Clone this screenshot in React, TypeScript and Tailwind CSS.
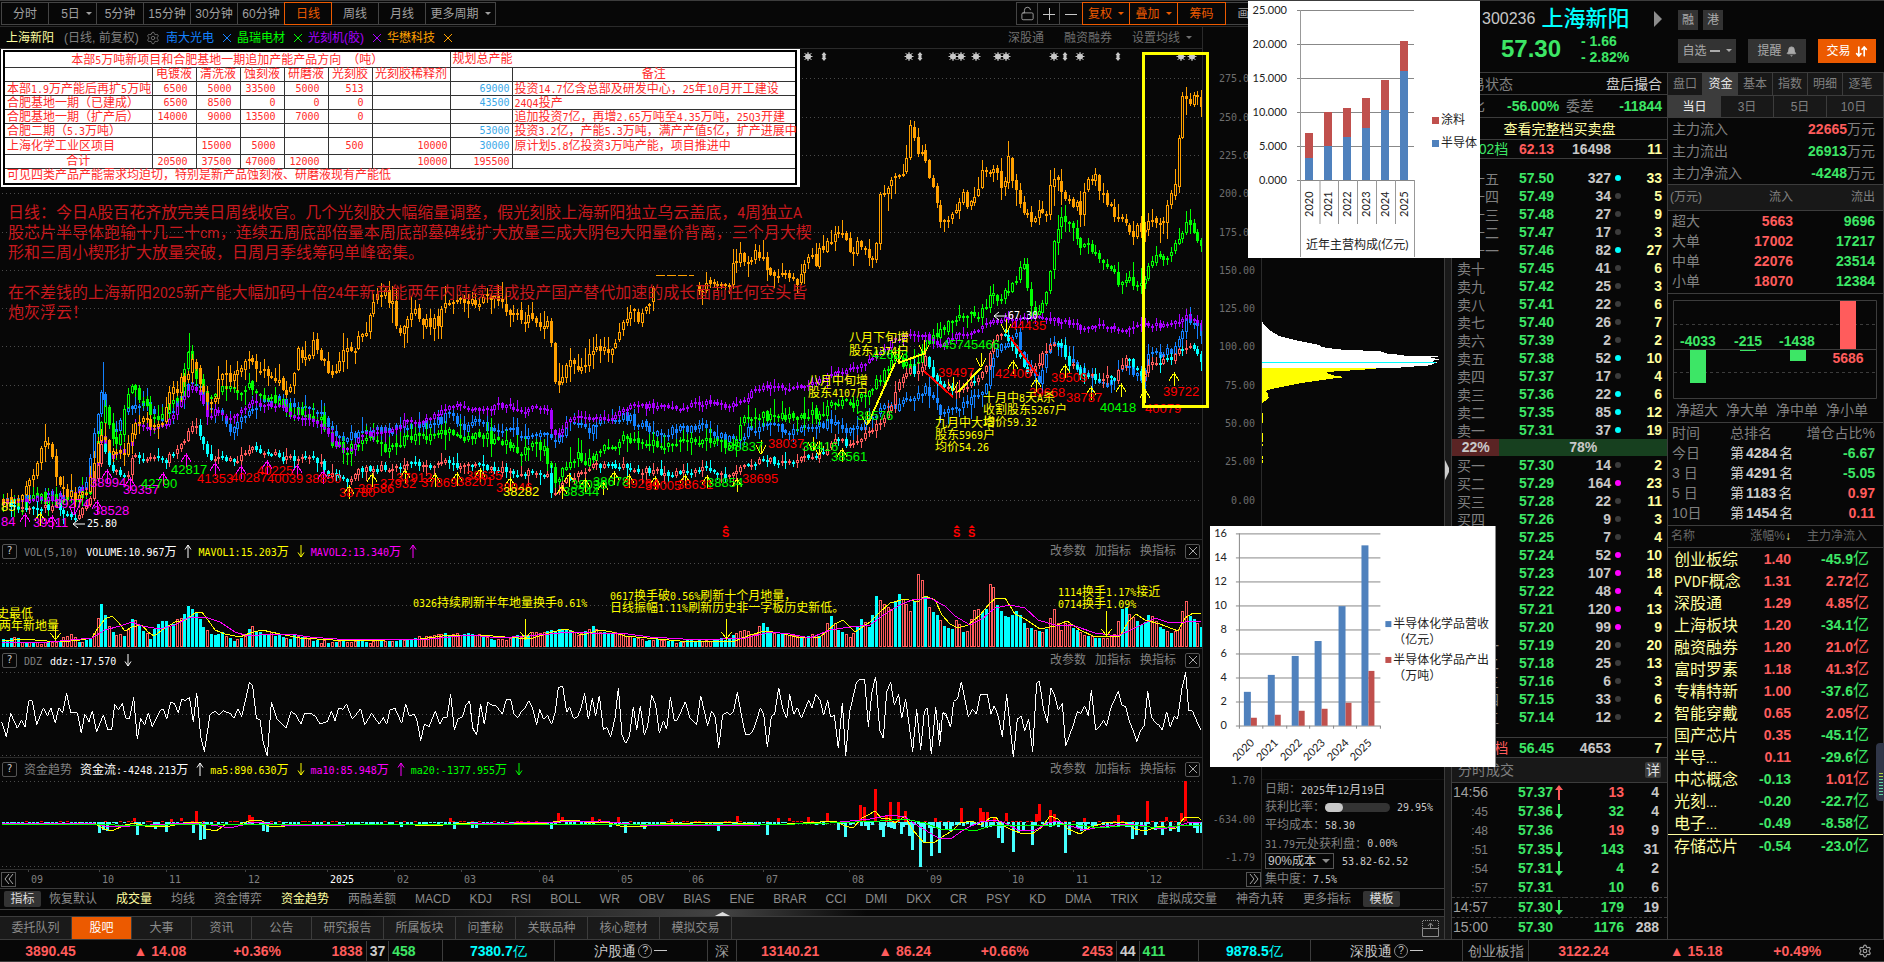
import React from 'react';
import { Bell, ArrowDownUp, Settings, LockOpen } from 'lucide-react';

type Point = [number, number];

const CJK = /([\u2e80-\uffef]+)/;

// latin runs are set in a half-width mono, CJK runs in the full-width face
const Mixed: React.FC<{ text: string; big?: boolean }> = ({ text, big }) => (
  <>
    {text.split(CJK).filter(Boolean).map((run, i) => (
      <span
        key={i}
        className={
          CJK.test(run)
            ? big ? "font-['Noto_Sans_CJK_SC',sans-serif] text-base leading-5" : "font-['Noto_Sans_CJK_SC',sans-serif] text-xs leading-[11px]"
            : big ? "font-['Roboto',sans-serif] text-sm leading-5" : "font-['DejaVu_Sans_Mono',monospace] text-[10px] leading-[11px]"
        }
      >
        {run}
      </span>
    ))}
  </>
);

const SvgMixed: React.FC<{ x: number; y: number; text: string; fill: string }> = ({ x, y, text, fill }) => (
  <text x={x} y={y} fill={fill}>
    {text.split(CJK).filter(Boolean).map((run, i) => (
      <tspan
        key={i}
        className={
          CJK.test(run)
            ? "font-['Noto_Sans_CJK_SC',sans-serif] text-xs"
            : "font-['DejaVu_Sans_Mono',monospace] text-[10px]"
        }
      >
        {run}
      </tspan>
    ))}
  </text>
);

/* ---------- data ---------- */

const parse = (s: string): Point[] => s.trim().split(/\s+/).map((p) => p.split(',').map(Number) as Point);

const ORANGE = parse(`2,502 22,500 27,485 33,478 40,455 47,440 52,460 56,478 60,485 66,493 74,494 84,492 92,480 97,440 101,430 105,440
 110,455 118,455 126,455 131,430 136,415 145,420 160,427 164,408 168,395 178,388 188,370 192,355 196,368 204,390 208,412 213,400 218,385
 224,375 230,383 236,367 244,362 252,360 258,375 268,370 276,378 280,378 284,390 292,390 296,345 304,360 312,345 318,350 326,365 332,380
 338,370 343,350 352,355 358,342 365,335 368,315 370,308 376,300 382,293 388,298 393,305 397,330 400,335 404,320 412,310 420,322 430,325
 440,318 443,303 448,298 456,300 466,308 470,303 480,305 486,295 490,300 500,305 508,308 515,315 525,318 535,325 547,322 552,350 554,382
 558,390 563,376 570,365 580,365 585,373 590,355 595,345 605,348 615,345 619,330 622,316 632,315 640,316 648,305 654,280 656,275 697,290
 702,285 706,282 720,288 729,286 733,265 738,250 745,262 752,254 760,258 768,265 775,275 783,268 790,282 798,283 803,270 808,255 815,262
 820,250 825,246 832,240 838,228 843,232 850,250 860,245 868,258 875,255 880,200 885,198 890,175 898,172 904,178 907,155 909,130 913,135
 918,155 924,158 930,180 936,195 940,220 945,213 948,225 955,215 960,195 970,205 976,190 982,172 990,170 996,175 1002,195 1008,155
 1012,180 1018,200 1025,210 1032,218 1038,212 1045,215 1050,190 1055,178 1062,192 1070,200 1080,210 1086,180 1092,175 1098,182 1105,195
 1112,212 1120,210 1125,225 1130,237 1136,232 1142,228 1150,225 1162,228 1168,200 1175,180 1178,150 1181,105 1186,95 1190,100 1194,90
 1198,100 1201,105`);

const GREEN = parse(`2,502 20,508 30,498 60,500 80,497 92,485 97,450 101,420 103,405 107,410 112,440 118,450 122,415 130,390 134,390 138,400
 150,410 160,418 165,410 172,395 180,400 188,350 193,370 200,385 207,400 214,395 222,390 230,385 236,390 243,398 250,385 258,395 268,398
 276,400 284,410 292,415 298,405 306,415 312,418 320,420 326,435 335,445 345,450 355,445 362,438 375,435 385,450 395,450 402,438 415,435
 430,435 445,430 455,435 465,438 475,433 490,440 505,440 520,458 530,440 545,450 550,470 556,480 562,467 575,455 588,462 600,450 615,445
 622,435 635,440 650,445 670,445 690,440 710,440 730,445 737,440 738,422 750,420 762,415 775,418 790,418 805,415 820,415 830,402 845,400
 855,405 865,395 875,385 882,375 888,370 895,355 903,365 912,370 925,345 935,335 945,330 951,318 960,320 985,310 992,285 998,300 1005,290
 1012,285 1018,275 1024,265 1030,300 1035,320 1049,285 1054,240 1058,225 1063,215 1070,225 1080,250 1090,245 1100,265 1110,270 1118,280
 1130,280 1140,285 1145,275 1150,260 1155,255 1162,260 1170,250 1178,240 1185,225 1192,230 1197,240 1201,247`);

const PURPLE = parse(`2,502 30,500 60,498 85,490 95,460 100,430 108,460 125,450 135,425 150,428 165,425 175,410 185,395 192,388 200,395
 207,415 218,410 230,420 240,412 250,402 265,405 280,405 290,415 305,418 318,425 325,430 335,445 350,450 360,435 380,432 395,430 405,420
 420,422 435,415 450,406 470,408 485,410 500,405 520,412 532,405 547,408 551,430 557,440 563,425 570,418 590,418 610,418 622,408 650,406
 670,408 690,405 710,402 730,407 742,400 752,393 762,385 775,387 800,387 815,380 830,375 845,372 860,365 870,358 880,352 895,340 910,335
 925,335 940,345 955,335 975,330 990,322 1010,318 1030,315 1045,320 1065,322 1080,328 1100,325 1125,332 1140,325 1160,325 1175,322
 1185,315 1195,320 1201,325`);

const BLUE = parse(`2,503 30,497 60,495 85,490 97,415 101,390 107,420 115,440 125,410 133,405 145,405 160,420 175,405 188,380 200,385
 207,410 218,410 230,428 245,415 255,405 275,402 290,405 305,405 320,415 330,432 345,440 360,430 375,430 395,430 410,425 430,425 440,420
 452,415 462,428 475,420 490,430 510,430 525,440 545,430 551,440 558,440 566,425 580,423 590,430 600,420 615,423 622,412 635,423 660,433
 680,430 700,428 715,435 735,438 750,430 765,425 785,430 810,428 830,422 850,430 865,425 880,410 895,405 910,400 925,390 940,410 955,412
 970,400 985,385 995,350 1003,345 1015,335 1030,370 1040,380 1050,345 1060,345 1070,362 1090,375 1105,388 1115,378 1125,360 1140,382
 1150,350 1160,355 1175,350 1185,320 1192,318 1201,335`);

const STOCK = parse(`2,504 25,508 60,508 72,520 82,512 90,500 97,465 101,440 104,450 110,470 120,472 128,475 132,455 138,458 150,460
 165,460 180,448 190,430 195,425 202,440 208,458 218,455 228,462 240,458 250,448 258,450 270,452 285,460 298,457 320,460 328,475 345,480
 360,470 380,468 405,465 430,465 450,460 460,468 475,463 490,470 505,470 520,477 535,470 548,475 551,490 556,492 565,480 580,475 595,465
 620,465 640,470 665,473 690,473 705,468 725,475 737,472 745,465 765,458 778,462 800,460 820,455 835,440 850,445 865,435 880,420 890,410
 900,380 910,370 920,375 925,355 935,380 945,390 960,388 975,380 985,365 995,335 1003,330 1015,350 1028,372 1040,360 1052,340 1060,345
 1070,365 1085,375 1100,378 1115,378 1125,355 1135,370 1143,378 1150,360 1165,362 1180,350 1188,345 1195,350 1201,362`);

const VOLUME = parse(`2,638 14,636 30,642 60,640 70,632 80,641 92,636 97,620 99,600 103,605 107,624 115,632 125,635 130,620 134,615 140,625
 150,637 155,625 163,618 170,625 178,618 186,610 190,602 194,610 200,618 206,630 215,633 222,630 232,640 245,635 251,623 258,632 270,631
 285,638 298,633 310,639 340,641 400,639 440,633 470,632 500,639 530,632 550,630 565,626 580,634 592,625 605,632 620,632 640,638 680,640
 730,637 740,629 755,632 762,620 770,631 800,636 812,632 822,634 830,613 838,628 850,636 862,617 870,628 876,594 882,600 890,610 898,592
 905,600 912,612 919,563 924,593 930,608 940,618 950,630 957,617 965,635 975,606 985,612 991,572 996,600 1003,613 1010,615 1018,608
 1025,625 1035,628 1045,632 1054,607 1060,630 1066,620 1075,628 1085,634 1105,636 1115,632 1123,603 1130,612 1140,625 1150,612 1160,625
 1170,632 1180,625 1185,595 1190,615 1201,624`);

const MAVOL1 = '2,640 14,640 22,639 60,642 80,640 92,638 98,628 105,619 112,616 119,623 125,631 132,627 142,625 148,632 154,636 165,628 175,622 185,620 195,613 202,612 208,620 215,630 225,634 240,637 250,633 262,630 280,634 300,638 350,641 420,639 450,635 480,635 530,639 552,632 566,629 582,635 600,630 612,632 625,636 680,641 735,641 750,635 765,631 780,633 800,638 820,637 835,624 843,620 855,632 870,622 880,612 890,603 905,599 918,602 925,596 935,600 942,615 950,624 958,628 968,625 980,615 990,603 996,598 1005,598 1015,614 1025,619 1040,629 1055,626 1067,621 1080,630 1095,637 1120,636 1128,622 1136,614 1145,620 1160,624 1178,631 1185,618 1193,613 1201,614';
const MAVOL2 = '2,643 50,642 92,638 105,630 120,626 132,622 142,626 160,629 175,625 190,617 205,617 220,622 235,632 248,636 270,634 290,634 310,637 350,640 430,639 470,635 500,638 550,634 570,632 590,633 620,633 650,637 700,640 745,638 770,632 790,634 810,638 830,630 850,627 870,625 885,614 900,605 912,600 930,598 945,606 955,616 970,625 982,619 995,608 1010,605 1025,608 1038,620 1055,625 1075,626 1095,633 1118,636 1135,628 1155,618 1170,623 1185,622 1201,621';

// three chunks of the ddz curve, three units to the pixel
const DDZ = [
  '5,245 19,290 32,220 52,265 64,240 75,262 86,183 97,183 110,255 130,203 142,228 153,205 166,250 176,203 188,218 200,160 212,218 232,218 244,280 254,222 267,245 277,213 290,275 310,225 324,270 335,270 344,193 355,210 367,190 377,235 388,237 401,172 412,298 422,235 434,255 445,218 457,260 480,212 490,206 500,238 512,187 523,190 535,218 545,177 557,182 568,172 580,245 590,158 602,290 613,335 630,225 645,213 658,225 668,212 690,220 703,235 713,206 725,230 740,165 748,128 758,137 769,235 780,240 790,310 802,347 814,187 830,235 858,265 873,215 888,225 903,253 914,220 935,220 948,232 960,252 982,245 994,213 1005,242 1016,203 1028,208 1040,193 1057,238 1082,206 1094,255 1115,220 1138,253 1150,232 1160,253 1170,210 1185,205 1205,250 1217,192 1228,228 1243,222 1252,245 1262,303 1273,253 1287,260 1306,213 1320,253 1330,233 1341,232 1352,163 1363,270 1375,235 1387,232 1398,195 1409,182 1418,265 1430,285 1440,205',
  '0,197 8,262 20,285 32,193 43,253 53,185 65,195 77,196 97,222 109,178 122,178 132,222 143,233 153,217 165,205 176,182 188,205 200,255 209,208 221,238 233,227 245,253 256,215 265,143 278,138 290,217 299,202 311,235 322,232 333,205 344,160 355,238 367,175 377,228 388,167 400,268 411,263 422,290 435,235 445,143 456,285 467,310 478,290 490,200 500,270 511,197 523,285 533,258 545,165 557,195 568,280 580,242 590,268 601,172 613,243 622,240 646,185 660,235 680,253 692,167 713,257 725,213 736,232 746,325 758,225 770,217 780,223 790,217 802,157 814,225 826,282 838,284 850,270 871,205 881,222 892,322 904,230 914,222 926,143 938,205 950,235 959,163 971,223 982,203 994,235 1016,180 1026,205 1037,163 1050,180 1061,226 1073,180 1082,232 1093,225 1105,325 1117,188 1127,347 1139,215 1160,125 1172,117 1184,120 1195,260 1206,155 1217,110 1229,270 1240,295 1250,155 1262,127 1273,195 1286,163 1295,235 1307,178 1318,260 1328,335 1340,208 1352,330 1363,215 1372,203 1384,343 1397,200 1409,318 1418,218 1428,222 1440,255',
  '-2,250 1,300 8,218 20,230 32,262 41,185 53,175 64,125 85,230 97,208 109,222 121,163 142,163 153,222 163,197 175,230 187,290 200,163 220,350 232,237 244,228 254,273 266,238 278,335 290,128 298,123 310,205 322,248 332,143 344,167 355,210 367,190 377,318 400,255 412,215 422,220 434,197 445,228 454,150 467,270 478,260 491,240 500,258 512,205 535,153 545,195 557,200 568,245 580,272 590,305 602,270 613,258 623,153 634,230 645,247 656,255 667,270 680,215 691,262 702,230 713,237 725,150 737,97 746,212 757,212 769,240 782,270',
];

const FLOW_DOWN = parse(`99,833 103,830 107,831 137,835 155,829 166,832 193,833 200,840 204,839 263,831 267,832 401,827 454,829 472,828 476,828 551,829
 610,827 625,833 644,829 718,831 767,835 838,830 845,837 868,830 880,830 883,837 894,829 901,834 909,836 912,850 920,867 924,842 931,856
 939,853 946,829 950,831 998,838 1002,843 1013,852 1018,833 1023,830 1032,845 1065,853 1069,835 1081,831 1085,829 1132,839 1136,835
 1145,835 1155,830 1162,835 1170,831 1178,832 1197,833 1201,833`);
const FLOW_UP = parse(`134,818 171,819 181,818 196,811 249,815 252,817 450,818 558,813 562,817 592,817 599,819 618,817 671,819 737,816 778,818
 789,818 808,817 827,813 860,805 864,807 875,789 886,815 890,802 898,802 905,811 935,818 961,808 980,808 983,812 987,812 994,818 1006,813
 1036,814 1039,804 1050,810 1054,814 1084,818 1118,815 1147,801 1166,817 1181,813 1185,781`);

const HOLDERS: [number, number, string, string][] = [
  [1, 521, '84', '#f0f'], [1, 506, '85', '#ff0'], [33, 522, '39511', '#f0f'], [54, 503, '39274', '#f0f'], [90, 482, '38994', '#f0f'],
  [93, 510, '38528', '#f0f'], [123, 489, '39357', '#f0f'], [141, 483, '42790', '#0f0'], [171, 469, '42817', '#0f0'],
  [197, 478, '41353', '#f00'], [231, 477, '40287', '#f00'], [257, 470, '40225', '#f00'], [267, 478, '40039', '#f00'],
  [305, 478, '38850', '#f00'], [339, 492, '38780', '#f00'], [358, 488, '38586', '#f00'], [380, 483, '37932', '#f00'],
  [396, 477, '37912', '#f00'], [421, 482, '37869', '#f00'], [457, 481, '38201', '#f00'], [466, 475, '38635', '#f00'],
  [496, 487, '38946', '#f00'], [503, 491, '38282', '#ff0'], [563, 491, '38344', '#0f0'], [571, 484, '38030', '#0f0'],
  [593, 481, '38678', '#0f0'], [623, 483, '39264', '#f00'], [645, 485, '39005', '#f00'], [677, 484, '38631', '#f00'],
  [707, 482, '38854', '#0f0'], [742, 478, '38695', '#f00'], [727, 446, '38837', '#0f0'], [768, 443, '38037', '#f00'],
  [802, 446, '38416', '#0f0'], [831, 456, '38561', '#0f0'], [857, 415, '38576', '#0f0'], [872, 354, '42683', '#0f0'],
  [938, 372, '39497', '#f00'], [942, 344, '45745466', '#0f0'], [1010, 325, '44435', '#f00'], [995, 373, '42406', '#f00'],
  [1051, 377, '39509', '#f00'], [1029, 392, '39668', '#f00'], [1066, 397, '38787', '#f00'], [1100, 407, '40418', '#0f0'],
  [1145, 408, '40079', '#f00'], [1163, 391, '39722', '#f00'],
];

const NOTES: [number, number, string][] = [
  [849, 338, '八月下旬增'], [849, 351, '股东1374户'], [808, 381, '八月中旬增'], [808, 393, '股东4107户'],
  [935, 423, '九月中大增'], [935, 435, '股东5969户'], [935, 447, '均价54.26'],
  [983, 398, '十月中8天A杀'], [983, 410, '收割股东5267户'], [983, 422, '均价59.32'],
];

const UP_MAGENTA = parse('25,513 52,515 107,469 130,477 97,500 163,472 186,453 215,462 241,465 267,460 297,464 323,470');
const UP_YELLOW = parse('40,512 349,485 372,473 405,469 435,473 457,472 480,468 510,477 562,485 569,473 585,478 603,481 614,471 629,474 655,476 685,474 707,475 737,478 842,448 1013,360 1036,378 1065,364 1091,386 1121,383 1145,389 1174,372');
const DOWN_YELLOW = parse('761,454 813,451 819,455 867,425 898,362 924,354 953,391 981,367 1006,333');

const SUNS = [808, 909, 953, 961, 976, 998, 1006, 1054, 1080, 1181, 1192];
const DIAMONDS = [824, 920, 1065, 1118];
const PRICE_GRID = [78, 117, 155, 193, 232, 270, 308, 346, 385, 423, 461, 500];
const MONTHS: [number, string][] = [
  [28, '09'], [99, '10'], [166, '11'], [245, '12'], [327, '2025'], [394, '02'], [461, '03'], [539, '04'],
  [618, '05'], [689, '06'], [763, '07'], [849, '08'], [927, '09'], [1009, '10'], [1073, '11'], [1147, '12'],
];

const CAPACITY: { name: string; cells: string[]; total: string; note: string; tall?: boolean }[] = [
  { name: '本部1.9万产能后再扩5万吨', cells: ['6500', '5000', '33500', '5000', '513', ''], total: '69000', note: '投资14.7亿含总部及研发中心，25年10月开工建设' },
  { name: '合肥基地一期（已建成）', cells: ['6500', '8500', '0', '0', '0', ''], total: '43500', note: '24Q4投产' },
  { name: '合肥基地一期（扩产后）', cells: ['14000', '9000', '13500', '7000', '0', ''], total: '', note: '追加投资7亿，再增2.65万吨至4.35万吨，25Q3开建' },
  { name: '合肥二期（5.3万吨）', cells: ['', '', '', '', '', ''], total: '53000', note: '投资3.2亿，产能5.3万吨，满产产值5亿，扩产进展中' },
  { name: '上海化学工业区项目', cells: ['', '15000', '5000', '', '500', '10000'], total: '30000', note: '原计划5.8亿投资3万吨产能，项目推进中', tall: true },
];

type Level = [string, string, string, string, string];
const SELLS: Level[] = [
  ['卖十五', '57.50', '327', 'c', '33'], ['卖十四', '57.49', '34', '', '5'], ['卖十三', '57.48', '27', '', '9'],
  ['卖十二', '57.47', '17', '', '3'], ['卖十一', '57.46', '82', 'c', '27'], ['卖十', '57.45', '41', '', '6'],
  ['卖九', '57.42', '25', '', '3'], ['卖八', '57.41', '22', '', '6'], ['卖七', '57.40', '26', '', '7'],
  ['卖六', '57.39', '2', '', '2'], ['卖五', '57.38', '52', 'c', '10'], ['卖四', '57.37', '17', '', '4'],
  ['卖三', '57.36', '22', 'c', '6'], ['卖二', '57.35', '85', 'c', '12'], ['卖一', '57.31', '37', 'c', '19'],
];
const BUYS: Level[] = [
  ['买一', '57.30', '14', '', '2'], ['买二', '57.29', '164', 'm', '23'], ['买三', '57.28', '22', '', '11'],
  ['买四', '57.26', '9', '', '3'], ['买五', '57.25', '7', '', '4'], ['买六', '57.24', '52', 'm', '10'],
  ['买七', '57.23', '107', 'm', '18'], ['买八', '57.22', '48', 'm', '4'], ['买九', '57.21', '120', 'm', '13'],
  ['买十', '57.20', '99', 'm', '9'], ['买十一', '57.19', '20', '', '20'], ['买十二', '57.18', '25', '', '13'],
  ['买十三', '57.16', '6', '', '3'], ['买十四', '57.15', '33', '', '6'], ['买十五', '57.14', '12', '', '2'],
];
const TRADES: [string, string, string, string, string, boolean][] = [
  ['14:56', '57.37', 'u', '13', '4', true], [':45', '57.36', 'd', '32', '4', false], [':48', '57.36', '', '19', '9', true],
  [':51', '57.35', 'd', '143', '31', false], [':54', '57.31', 'd', '4', '2', false], [':57', '57.31', '', '10', '6', false],
  ['14:57', '57.30', 'd', '179', '19', false], ['15:00', '57.30', '', '1176', '288', false],
];
const SECTORS: [string, string, string][] = [
  ['创业板综', '1.40', '-45.9'], ['PVDF概念', '1.31', '2.72'], ['深股通', '1.29', '4.85'], ['上海板块', '1.20', '-34.1'],
  ['融资融券', '1.20', '21.0'], ['富时罗素', '1.18', '41.3'], ['专精特新', '1.00', '-37.6'], ['智能穿戴', '0.65', '2.05'],
  ['国产芯片', '0.35', '-45.1'], ['半导...', '0.11', '-29.6'], ['中芯概念', '-0.13', '1.01'], ['光刻...', '-0.20', '-22.7'],
  ['电子...', '-0.49', '-8.58'], ['存储芯片', '-0.54', '-23.0'],
];

/* ---------- drawing helpers ---------- */

const rng = (seed: number) => () => {
  seed = (seed * 1664525 + 1013904223) % 4294967296;
  return seed / 4294967296;
};

const at = (pts: Point[], x: number) => {
  const i = pts.findIndex((p) => p[0] >= x);
  if (i <= 0) return pts[i === 0 ? 0 : pts.length - 1][1];
  const [x0, y0] = pts[i - 1];
  const [x1, y1] = pts[i];
  return y0 + ((y1 - y0) * (x - x0)) / (x1 - x0 || 1);
};

const STEP = 3.78;

const candles = (pts: Point[], vol: number, seed: number, gap?: Point) => {
  const r = rng(seed);
  let up = '';
  let down = '';
  let prev = pts[0][1];
  for (let x = 3; x < 1202; x += STEP) {
    if (gap && x > gap[0] && x < gap[1]) continue;
    const close = at(pts, x) + (r() - 0.5) * vol * 1.3;
    const open = prev + (r() - 0.5) * vol * 0.5;
    prev = close;
    const cx = Math.round(x);
    const top = Math.round(Math.min(open, close));
    const bot = Math.max(Math.round(Math.max(open, close)), top + 2);
    const hi = Math.round(top - r() * r() * vol * 2 - 1);
    const lo = Math.round(bot + r() * r() * vol * 2 + 1);
    const d = `M${cx + 0.5} ${hi}V${top}M${cx + 0.5} ${bot}V${lo}M${cx - 0.5} ${top + 0.5}h2V${bot - 0.5}h-2z`;
    if (close <= open) up += d;
    else down += d;
  }
  return { up, down };
};

const Candles: React.FC<{ pts: Point[]; vol: number; seed: number; up: string; down: string; gap?: Point }> = ({ pts, vol, seed, up, down, gap }) => {
  const d = candles(pts, vol, seed, gap);
  return (
    <>
      <path d={d.up} stroke={up} fill="#070707" />
      <path d={d.down} stroke={down} fill={down} />
    </>
  );
};

const Grid: React.FC<{ ys: number[] }> = ({ ys }) => (
  <>
    {ys.map((y) => (
      <line key={y} x1="2" x2="1202" y1={y + 0.5} y2={y + 0.5} stroke="#4a4a4a" strokeDasharray="1 3" />
    ))}
  </>
);

const arrowUp = ([x, y]: Point) => `M${x} ${y}v14M${x - 5} ${y + 9}L${x - 1} ${y + 2}h2L${x + 5} ${y + 9}`;
const arrowDown = ([x, y]: Point) => `M${x} ${y}v-14M${x - 5} ${y - 9}L${x - 1} ${y - 1}h2L${x + 5} ${y - 9}`;

/* ---------- left side: panes ---------- */

const MainChart = () => (
  <svg viewBox="0 49 1202 490" preserveAspectRatio="xMinYMin meet" className="block w-full h-[490px]">
    <g shapeRendering="crispEdges">
      <Grid ys={PRICE_GRID} />
      <Candles pts={BLUE} vol={7} seed={11} up="#1482ff" down="#1482ff" />
      <Candles pts={GREEN} vol={8} seed={23} up="#00ff00" down="#00ff00" />
      <Candles pts={PURPLE} vol={4} seed={5} up="#a800ff" down="#a800ff" />
      <Candles pts={ORANGE} vol={10} seed={37} up="#ffa000" down="#ffa000" gap={[656, 695]} />
      <Candles pts={STOCK} vol={5} seed={41} up="#ff5c5c" down="#00ffff" />
      <path d="M656 275.5H694" stroke="#ffa000" strokeDasharray="9 2" />
      <path d="M103.5 362V400" stroke="#1482ff" />
      <path d="M189.5 333V360" stroke="#00ff00" />
    </g>
    {SUNS.map((x) => (
      <g key={x} stroke="#c8c8c8" fill="#c8c8c8">
        <circle cx={x} cy="56.5" r="2.6" />
        <path d={`M${x} 52v9M${x - 4.5} 56.5h9M${x - 3.5} 53l7 7M${x + 3.5} 53l-7 7`} fill="none" />
      </g>
    ))}
    {DIAMONDS.map((x) => (
      <path key={x} d={`M${x} 52l2.5 3h-1v3h1l-2.5 3l-2.5-3h1v-3h-1z`} fill="#c8c8c8" />
    ))}
    <g shapeRendering="crispEdges">
      <path d={UP_MAGENTA.map(arrowUp).join('') + arrowDown([74, 515])} stroke="#f0f" fill="none" />
      <path d={UP_YELLOW.map(arrowUp).join('') + DOWN_YELLOW.map(arrowDown).join('')} stroke="#ff0" fill="none" />
      <path d="M868 424L895 363M898 363L926 353M958 392L981 368" stroke="#ff0" strokeWidth="2" />
      <path d="M924 371L953 397M1010 337L1038 376" stroke="#f00" strokeWidth="2" />
    </g>
    <g className="font-['Liberation_Sans',sans-serif] text-[13px]">
      {HOLDERS.map(([x, y, label, color]) => (
        <text key={label + x} x={x} y={y + 5} fill={color}>{label}</text>
      ))}
    </g>
    {NOTES.map(([x, y, label]) => (
      <SvgMixed key={label} x={x} y={y + 4} text={label} fill="#ff0" />
    ))}
    <path d="M73 524h12M73 524l5-4M73 524l5 4M994 316h13M994 316l5-4M994 316l5 4" stroke="#fff" fill="none" />
    <SvgMixed x={87} y={527} text="25.80" fill="#fff" />
    <SvgMixed x={1008} y={319} text="67.30" fill="#fff" />
    <g fill="#f00" className="font-['Liberation_Sans',sans-serif] text-[11px] font-bold">
      {[726, 957, 972].map((x) => (
        <g key={x}>
          <text x={x - 4} y="537">S</text>
          <path d={`M${x - 3} 528l3-3l3 3z`} />
        </g>
      ))}
    </g>
  </svg>
);

const PriceAxis = () => (
  <svg viewBox="0 49 58 490" className="block w-[58px] h-[490px] shrink-0 font-['DejaVu_Sans_Mono',monospace] text-[10px]">
    {PRICE_GRID.map((y, i) => (
      <text key={y} x="52" y={y + 4} textAnchor="end" fill="#6e6e6e">{(275 - i * 25).toFixed(2)}</text>
    ))}
  </svg>
);

const volumeBars = () => {
  const r = rng(9);
  let up = '';
  let down = '';
  for (let x = 3; x < 1202; x += STEP) {
    const cx = Math.round(x);
    const y = Math.round(Math.min(645, at(VOLUME, x) + r() * 3));
    if (r() > 0.5) up += `M${cx - 0.5} ${y + 0.5}h2V646.5h-2z`;
    else down += `M${cx - 1} ${y}h3V647h-3z`;
  }
  return { up, down };
};

const VolumeChart = () => {
  const bars = volumeBars();
  return (
    <svg viewBox="0 562 1202 86" preserveAspectRatio="xMinYMin meet" className="block w-full h-[86px]">
      <g shapeRendering="crispEdges">
        <Grid ys={[563, 605]} />
        <path d={bars.up} stroke="#ff5c5c" fill="#070707" />
        <path d={bars.down} fill="#00ffff" />
        <polyline points={MAVOL1} stroke="#ff0" fill="none" />
        <polyline points={MAVOL2} stroke="#f0f" fill="none" />
        <path
          d="M55.5 625v15m-5-7l5 7l5-7M525.5 619v20m-5-7l5 7l5-7M726.5 619v20m-5-7l5 7l5-7M1106.5 611v25m-5-7l5 7l5-7"
          stroke="#ff0"
          fill="none"
        />
      </g>
      <SvgMixed x={-3} y={618} text="史最低" fill="#ff0" />
      <SvgMixed x={-1} y={630} text="两年新地量" fill="#ff0" />
      <SvgMixed x={413} y={607} text="0326持续刷新半年地量换手0.61%" fill="#ff0" />
      <SvgMixed x={610} y={600} text="0617换手破0.56%刷新十个月地量，" fill="#ff0" />
      <SvgMixed x={610} y={612} text="日线振幅1.11%刷新历史非一字板历史新低。" fill="#ff0" />
      <SvgMixed x={1058} y={596} text="1114换手1.17%接近" fill="#ff0" />
      <SvgMixed x={1058} y={608} text="0714换手1.09%" fill="#ff0" />
    </svg>
  );
};

const DdzChart = () => (
  <svg viewBox="0 671 1202 86" preserveAspectRatio="xMinYMin meet" className="block w-full h-[86px]" shapeRendering="crispEdges">
    <Grid ys={[672, 714, 755]} />
    {DDZ.map((points, i) => (
      <g key={i} transform={`translate(${i * 470} 640) scale(0.33333)`}>
        <polyline points={points} stroke="#fff" strokeWidth="3" fill="none" />
      </g>
    ))}
  </svg>
);

const flowBase = () => {
  const r = rng(77);
  let up = '';
  let down = '';
  for (let x = 3; x < 1202; x += STEP) {
    const cx = Math.round(x);
    if (r() > 0.75) up += `M${cx - 1} 821h3v1h-3z`;
    else down += `M${cx - 1} 822h3v${1 + Math.round(r() * (x > 850 ? 5 : 2))}h-3z`;
  }
  FLOW_DOWN.forEach(([x, y]) => { down += `M${x - 1} 822h3V${y}h-3z`; });
  FLOW_UP.forEach(([x, y]) => { up += `M${x - 1} 822h3V${y}h-3z`; });
  return { up, down };
};

const FlowChart = () => {
  const bars = flowBase();
  return (
    <svg viewBox="0 780 1202 89" preserveAspectRatio="xMinYMin meet" className="block w-full h-[89px]" shapeRendering="crispEdges">
      <Grid ys={[781, 824, 866]} />
      <path d={bars.up} fill="#f00" />
      <path d={bars.down} fill="#4ff" />
      <g fill="none">
        <polyline stroke="#ff0" points="2,824 80,823 96,824 104,829 112,831 125,825 135,823 145,826 165,827 180,824 188,822 200,822 206,829 216,831 225,825 240,824 252,820 262,821 270,827 285,826 300,824 400,824 430,826 470,823 540,824 560,821 575,820 590,823 605,822 620,826 640,827 660,824 720,822 770,825 820,822 835,821 845,826 853,828 862,818 868,815 875,811 882,819 888,818 895,823 905,816 912,829 918,836 924,843 935,842 945,835 952,831 960,823 972,821 980,825 990,818 996,817 1002,825 1010,829 1020,833 1032,834 1042,827 1050,816 1058,819 1068,829 1080,834 1090,827 1105,823 1125,822 1135,829 1145,831 1160,826 1175,829 1185,817 1198,817 1201,820" />
        <polyline stroke="#f0f" points="2,823 90,823 110,827 150,825 190,823 205,824 230,828 255,822 290,826 400,824 470,824 560,822 600,821 640,825 760,825 830,823 870,819 890,815 905,817 915,824 930,833 940,839 952,838 965,829 980,822 995,820 1005,823 1020,831 1035,830 1048,823 1058,821 1070,826 1085,830 1105,826 1125,824 1145,826 1160,829 1175,827 1190,822 1201,822" />
        <polyline stroke="#0f0" points="2,824 100,824 130,826 200,824 300,825 420,824 540,824 640,824 760,825 830,823 880,821 905,819 925,823 940,829 960,829 975,831 990,826 1010,825 1040,826 1070,824 1100,828 1130,825 1160,828 1185,825 1201,825" />
      </g>
    </svg>
  );
};

const ArrowGlyph: React.FC<{ down?: boolean }> = ({ down }) => (
  <svg viewBox="0 0 8 14" className="w-2 h-3.5" stroke="currentColor" fill="none">
    <path d={down ? 'M4 1v12M1 8.5L4 13L7 8.5' : 'M4 1v13M1 5.5L4 1L7 5.5'} />
  </svg>
);

interface PaneHeaderProps {
  name: string;
  values: { text: string; down?: boolean; color: string }[];
}

const PaneHeader: React.FC<PaneHeaderProps> = ({ name, values }) => (
  <div className="flex items-center h-[23px] pl-0.5 pr-0.5 border-t border-[#2a2a2a]">
    <button className="w-[15px] h-[15px] rounded-xs border border-[#555] text-[#ccc] text-[10px] leading-3 font-['DejaVu_Sans_Mono',monospace]">?</button>
    <span className="ml-[7px] mr-2 text-[#808080] whitespace-pre"><Mixed text={name} /></span>
    {values.map((v) => (
      <span key={v.text} className={`flex items-center gap-2 mr-1.5 ${v.color}`}>
        <span><Mixed text={v.text} /></span>
        <ArrowGlyph down={v.down} />
      </span>
    ))}
    <div className="ml-auto flex items-center gap-[9px] text-xs leading-3 text-[#808080]">
      <button>改参数</button>
      <button>加指标</button>
      <button>换指标</button>
      <button aria-label="关闭" className="w-[15px] h-[15px] flex items-center justify-center rounded-xs border border-[#555]">
        <svg viewBox="0 0 8 8" className="w-2 h-2" stroke="#aaa"><path d="M0 0L8 8M8 0L0 8" /></svg>
      </button>
    </div>
  </div>
);

const CapacityTable = () => (
  <div className="absolute left-px top-0 w-[799px] h-[138px] bg-white px-[2px] pt-px text-[#ff2a2a]">
    <table className="w-[794px] table-fixed border-collapse border-2 border-black text-xs leading-[11px] [&_td]:border [&_td]:border-[#333] [&_th]:border [&_th]:border-[#333] [&_th]:font-normal [&_td]:p-0 [&_th]:p-0">
      <colgroup>
        <col className="w-[148px]" />
        <col className="w-[44px]" /><col className="w-[44px]" /><col className="w-[44px]" /><col className="w-[44px]" /><col className="w-[44px]" />
        <col className="w-[78px]" /><col className="w-[62px]" /><col />
      </colgroup>
      <thead>
        <tr className="h-4">
          <th colSpan={7}><Mixed text="本部5万吨新项目和合肥基地一期追加产能产品方向 （吨）" /></th>
          <th colSpan={2} className="text-left"><span className="pl-0.5">规划总产能</span></th>
        </tr>
        <tr className="h-3.5">
          <th />
          {['电镀液', '清洗液', '蚀刻液', '研磨液', '光刻胶', '光刻胶稀释剂'].map((h) => <th key={h}>{h}</th>)}
          <th />
          <th>备注</th>
        </tr>
      </thead>
      <tbody>
        {CAPACITY.map((row) => (
          <tr key={row.name} className={row.tall ? 'h-[17px]' : 'h-3.5'}>
            <td className="whitespace-nowrap"><span className="pl-0.5"><Mixed text={row.name} /></span></td>
            {row.cells.map((c, i) => <td key={i} className="text-right"><span className={i === 5 ? 'pr-0.5' : 'pr-2'}><Mixed text={c} /></span></td>)}
            <td className="text-right text-[#3aa8e8]"><span className="pr-0.5"><Mixed text={row.total} /></span></td>
            <td className="whitespace-nowrap"><span className="pl-0.5"><Mixed text={row.note} /></span></td>
          </tr>
        ))}
        <tr className="h-3.5">
          <td className="text-center">合计</td>
          {['20500', '37500', '47000', '12000', '', '10000'].map((c, i) => (
            <td key={i} className="text-right"><span className={i === 5 ? 'pr-0.5' : 'pr-2'}><Mixed text={c} /></span></td>
          ))}
          <td className="text-right"><span className="pr-0.5"><Mixed text="195500" /></span></td>
          <td />
        </tr>
        <tr className="h-4">
          <td colSpan={9}><span className="pl-0.5">可见四类产品产能需求均迫切，特别是新产品蚀刻液、研磨液现有产能低</span></td>
        </tr>
      </tbody>
    </table>
  </div>
);

const Commentary = () => (
  <div className="absolute left-2 top-[152px] w-[812px] text-[#c8191e] whitespace-nowrap leading-5">
    {[
      '日线：今日A股百花齐放完美日周线收官。几个光刻胶大幅缩量调整，假光刻胶上海新阳独立乌云盖底，4周独立A',
      '股芯片半导体跑输十几二十cm，连续五周底部倍量本周底部墓碑线扩大放量三成大阴包大阳量价背离，三个月大楔',
      '形和三周小楔形扩大放量突破，日周月季线筹码单峰密集。',
      '',
      '在不差钱的上海新阳2025新产能大幅加码十倍24年新产能两年内陆续建成投产国产替代加速的成长面前任何空头皆',
      '炮灰浮云！',
    ].map((line, i) => (
      <p key={i} className="h-5"><Mixed big text={line} /></p>
    ))}
  </div>
);

const OVERLAYS = [
  { name: '南大光电', color: 'text-[#1482ff]' },
  { name: '晶瑞电材', color: 'text-[#00ff00]' },
  { name: '光刻机(胶)', color: 'text-[#a800ff]' },
  { name: '华懋科技', color: 'text-[#ffa000]' },
];

const Caret = () => (
  <svg viewBox="0 0 6 3" className="inline-block w-1.5 h-[3px] ml-1.5 mb-0.5 align-middle" fill="currentColor"><path d="M0 0H6L3 3z" /></svg>
);

const Toolbar = () => (
  <div className="flex justify-between h-[26px] pt-px pl-px border-b border-[#2a2a2a] text-xs text-[#a0a0a0]">
    <div className="flex h-[23px]">
      <button className="w-[47px] border border-r-0 border-[#444]">分时</button>
      <button className="w-12 border border-r-0 border-[#444] whitespace-nowrap pl-2">5日<Caret /></button>
      {['5分钟', '15分钟', '30分钟', '60分钟'].map((t) => (
        <button key={t} className="w-[47px] border border-r-0 border-[#444] whitespace-nowrap">{t}</button>
      ))}
      <button className="w-12 border border-[#ec5a00] text-[#ec5a00]">日线</button>
      <button className="w-[47px] border border-l-0 border-[#444]">周线</button>
      <button className="w-[47px] border border-l-0 border-[#444]">月线</button>
      <button className="w-[70px] border border-l-0 border-[#444] whitespace-nowrap">更多周期<Caret /></button>
    </div>
    <div className="flex h-[23px] w-[428px] shrink-0">
      <button aria-label="锁定" className="w-[22px] border border-[#444] flex items-center justify-center"><LockOpen size={15} strokeWidth={1.5} /></button>
      <button aria-label="放大" className="w-[22px] border border-l-0 border-[#444] flex items-center justify-center">
        <svg viewBox="0 0 12 12" className="w-3 h-3" stroke="#c8c8c8" shapeRendering="crispEdges"><path d="M6.500 0v12M0 6.500h12" /></svg>
      </button>
      <button aria-label="缩小" className="w-[22px] border-y border-[#444] flex items-center justify-center">
        <svg viewBox="0 0 12 12" className="w-3 h-3" stroke="#c8c8c8" shapeRendering="crispEdges"><path d="M0 6.500h12" /></svg>
      </button>
      <button className="w-12 border border-[#ec5a00] text-[#ec5a00] whitespace-nowrap">复权<Caret /></button>
      <button className="w-12 border border-l-0 border-[#ec5a00] text-[#ec5a00] whitespace-nowrap">叠加<Caret /></button>
      <button className="w-12 border border-l-0 border-[#ec5a00] text-[#ec5a00]">筹码</button>
      <button className="w-12 border border-l-0 border-[#444]">画线</button>
    </div>
  </div>
);

const LegendRow = () => (
  <div className="flex items-center justify-between h-[22px] pl-1.5 border-b border-[#2a2a2a]">
    <div className="flex items-center text-xs">
      <span className="text-[#ffffa0]">上海新阳</span>
      <span className="ml-2.5 w-[82px] text-[#808080] whitespace-nowrap">(日线, 前复权)</span>
      <Settings size={14} strokeWidth={1.5} className="text-[#777] mr-1.5" />
      {OVERLAYS.map((o) => (
        <span key={o.name} className={`flex items-center mr-[6px] ${o.color}`}>
          {o.name}
          <button aria-label={`移除${o.name}`} className="ml-[9px]"><svg viewBox="0 0 8 8" className="w-2 h-2" stroke="currentColor"><path d="M0 0L8 8M8 0L0 8" /></svg></button>
        </span>
      ))}
    </div>
    <div className="flex gap-5 pr-2.5 text-xs text-[#707070]">
      <button>深股通</button>
      <button>融资融券</button>
      <button>设置均线<Caret /></button>
    </div>
  </div>
);

const ChipColumn = () => (
  <div className="flex flex-col w-[183px] shrink-0 border-l border-[#2a2a2a]">
    <svg viewBox="1261 27 182 752" className="block w-[182px] h-[752px]" shapeRendering="crispEdges">
      <path
        fill="#fff"
        d="M1261 321L1264 326L1270 331L1278 336L1290 339L1303 342L1318 345L1320 347L1335 349L1345 350L1378 351L1388 354L1403 355V356H1440L1426 358L1441 359L1430 361L1438 363L1428 364L1434 365L1420 366L1405 367H1400V368H1261z"
      />
      <path fill="#ff0" d="M1261 368H1380L1358 370L1340 371L1326 372L1325 373L1332 375L1334 376L1345 377L1328 379L1315 381L1300 383L1286 386L1270 389L1264 391L1267 393V397L1268 398L1264 401L1261 403z" />
      <path d="M1261 362.5H1435" stroke="#00ffff" />
      <path d="M1261.5 413v10M1261.5 433v9M1261.5 444v2M1261.5 456v3M1261.5 460v3" stroke="#ff0" />
    </svg>
    <div className="flex flex-col h-[109px] border-t border-[#111] text-[#c8c8c8] pl-[3px]">
      <div className="flex items-center h-[18px]"><span className="text-[#808080] text-xs leading-3">日期：</span><span><Mixed text="2025年12月19日" /></span></div>
      <div className="flex items-center h-[18px]">
        <span className="text-[#808080] text-xs leading-3">获利比率：</span>
        <span className="w-[65px] h-[9px] rounded-full bg-[#333] mr-[7px]"><span className="block w-[18px] h-[9px] rounded-full bg-[#c8c8c8]" /></span>
        <Mixed text="29.95%" />
      </div>
      <div className="flex items-center h-[18px]"><span className="text-[#808080] text-xs leading-3">平均成本：</span><Mixed text="58.30" /></div>
      <div className="flex items-center h-[18px]"><span className="text-[#808080]"><Mixed text="31.79元处获利盘：" /></span><Mixed text="0.00%" /></div>
      <div className="flex items-center h-[18px] gap-2">
        <span className="relative flex items-center">
          <select aria-label="成本区间" className="appearance-none w-[69px] h-4 pl-0.5 bg-[#070707] border border-[#555] text-xs leading-3 text-[#c8c8c8]"><option>90%成本</option></select>
          <svg viewBox="0 0 8 4" className="absolute right-1 w-2 h-1 pointer-events-none" fill="#8c8c8c"><path d="M0 0H8L4 4z" /></svg>
        </span>
        <Mixed text="53.82-62.52" />
      </div>
      <div className="flex items-center h-[18px]"><span className="text-[#808080] text-xs leading-3">集中度：</span><Mixed text="7.5%" /></div>
    </div>
  </div>
);

const TimeAxis = () => (
  <div className="flex items-center justify-between h-[19px] border-t border-[#2a2a2a]">
    <button aria-label="向前" className="ml-px w-[15px] h-[15px] border border-[#555] flex items-center justify-center">
      <svg viewBox="0 0 10 10" className="w-2.5 h-2.5" stroke="#aaa" fill="none"><path d="M5 0L1 5L5 10M9 0L5 5L9 10" /></svg>
    </button>
    <svg viewBox="16 870 1186 18" preserveAspectRatio="xMinYMin meet" className="flex-1 h-[18px] font-['DejaVu_Sans_Mono',monospace] text-[10px]">
      {MONTHS.map(([x, m]) => (
        <g key={x}>
          <path d={`M${x + 0.5} 870v2`} stroke="#444" />
          <text x={x + 3} y="883" fill={m === '2025' ? '#fff' : '#808080'}>{m}</text>
        </g>
      ))}
    </svg>
    <button aria-label="向后" className="w-[15px] h-[15px] border border-[#555] flex items-center justify-center">
      <svg viewBox="0 0 10 10" className="w-2.5 h-2.5" stroke="#aaa" fill="none"><path d="M1 0L5 5L1 10M5 0L9 5L5 10" /></svg>
    </button>
  </div>
);

const INDICATORS = ['恢复默认', '成交量', '均线', '资金博弈', '资金趋势', '两融差额', 'MACD', 'KDJ', 'RSI', 'BOLL', 'WR', 'OBV', 'BIAS', 'ENE', 'BRAR', 'CCI', 'DMI', 'DKX', 'CR', 'PSY', 'KD', 'DMA', 'TRIX', '虚拟成交量', '神奇九转', '更多指标'];
const TABS = ['委托队列', '股吧', '大事', '资讯', '公告', '研究报告', '所属板块', '问董秘', '关联品种', '核心题材', '模拟交易'];

const IndicatorBar = () => (
  <div className="flex items-center h-[21px] pl-1 border-t border-[#3c3c3c] text-xs leading-4 text-[#8c8c8c] whitespace-nowrap">
    <button className="w-[37px] h-4 mr-2 rounded-xs bg-[#333] text-[#ddd]">指标</button>
    <div className="flex gap-[19px] font-['Liberation_Sans','Noto_Sans_CJK_SC',sans-serif]">
      {INDICATORS.map((t) => (
        <button key={t} className={t === '成交量' || t === '资金趋势' ? 'text-[#ffffa0]' : ''}>{t}</button>
      ))}
    </div>
    <button className="w-[37px] h-4 ml-3 rounded-xs bg-[#333] text-[#ddd]">模板</button>
  </div>
);

const TabBar = () => (
  <div className="flex h-[23px] border-t border-[#3c3c3c] bg-[#1a1a1a] text-xs text-[#8c8c8c]">
    {TABS.map((t) => (
      <button
        key={t}
        className={`border-r border-[#3c3c3c] ${t.length === 4 ? 'w-[72px]' : 'w-[60px]'} ${t === '股吧' ? 'bg-[#ec5a00] text-white' : ''}`}
      >
        {t}
      </button>
    ))}
    <button aria-label="展开" className="ml-auto mr-[5px] self-center">
      <svg viewBox="0 0 17 17" className="w-[17px] h-[17px]" stroke="#8c8c8c" fill="none">
        <path d="M.5 8.5h16v8h-16z" /><path d="M.5 8V.5h16V8" strokeDasharray="1 1" /><path d="M8.5 8V4M6 6l2.5-3L11 6" />
      </svg>
    </button>
  </div>
);

/* ---------- pasted charts ---------- */

const RevenueMix = () => {
  const rows: [string, number, number, number][] = [
    ['2020', 1309, 133, 158], ['2021', 1328, 112, 146], ['2022', 1347, 108, 137],
    ['2023', 1366, 98, 128], ['2024', 1385, 80, 110], ['2025', 1404, 41, 71],
  ];
  return (
    <svg viewBox="1248 1 232 257" className="absolute right-[404px] top-0 w-[232px] h-[257px] bg-white font-['Lato','Noto_Sans_CJK_SC',sans-serif] text-[11px]">
      {['25.000', '20.000', '15.000', '10.000', '5.000', '0.000'].map((t, i) => (
        <g key={t}>
          <text x="1287" y={14 + i * 34} textAnchor="end" fill="#222">{t}</text>
          <line x1="1297" x2="1414" y1={10.5 + i * 34} y2={10.5 + i * 34} stroke="#888" />
        </g>
      ))}
      {rows.map(([year, x, red, blue]) => (
        <g key={year}>
          <rect x={x - 4} y={red} width="8" height={blue - red} fill="#c0504d" />
          <rect x={x - 4} y={blue} width="8" height={180 - blue} fill="#4f81bd" />
          <text transform={`translate(${x + 4} 217) rotate(-90)`} fill="#222">{year}</text>
        </g>
      ))}
      <path d="M1300.5 10V257M1414.5 180V257M1320 180v44M1338.5 180v44M1357.500 180v44M1376.500 180v44M1395.500 180v44" stroke="#999" />
      <text x="1306" y="249" fill="#222" className="text-xs">近年主营构成(亿元)</text>
      <rect x="1432" y="117" width="7" height="7" fill="#c0504d" />
      <text x="1441" y="124" fill="#222" className="text-xs">涂料</text>
      <rect x="1432" y="140" width="7" height="7" fill="#4f81bd" />
      <text x="1441" y="147" fill="#222" className="text-xs">半导体</text>
    </svg>
  );
};

const OutputChart = () => {
  const rows: [string, number, number, number][] = [
    ['2020', 1244, 692, 718], ['2021', 1268, 675, 715], ['2022', 1292, 656, 711],
    ['2023', 1315, 641, 709], ['2024', 1339, 606, 703], ['2025', 1362, 545, 671],
  ];
  return (
    <svg viewBox="1210 526 286 241" className="absolute right-[388px] top-[525px] w-[286px] h-[241px] bg-white border-r border-[#888] font-['Lato','Noto_Sans_CJK_SC',sans-serif] text-xs">
      {[16, 14, 12, 10, 8, 6, 4, 2, 0].map((v, i) => (
        <g key={v}>
          <text x="1227" y={537 + i * 24} textAnchor="end" fill="#222" className="text-[11px]">{v}</text>
          <line x1="1236" x2="1381" y1={533.5 + i * 24.1} y2={533.5 + i * 24.1} stroke="#888" />
        </g>
      ))}
      <path d="M1239.500 533V729M1263 726v3M1287 726v3M1310 726v3M1334 726v3M1357 726v3M1381 726v3" stroke="#888" />
      {rows.map(([year, x, blue, red]) => (
        <g key={year}>
          <rect x={x} y={blue} width="7" height={726 - blue} fill="#4f81bd" />
          <rect x={x + 7} y={red} width="6" height={726 - red} fill="#c0504d" />
          <text transform={`translate(${x - 7} 762) rotate(-45)`} fill="#222" className="text-[11px]">{year}</text>
        </g>
      ))}
      <rect x="1386" y="621" width="6" height="6" fill="#4f81bd" />
      <text x="1394" y="628" fill="#222">半导体化学品营收</text>
      <text x="1394" y="644" fill="#222">（亿元）</text>
      <rect x="1386" y="657" width="6" height="6" fill="#c0504d" />
      <text x="1394" y="664" fill="#222">半导体化学品产出</text>
      <text x="1394" y="680" fill="#222">（万吨）</text>
    </svg>
  );
};

/* ---------- right side ---------- */

const num = "font-['Liberation_Sans',sans-serif] font-bold text-sm";
const red = 'text-[#ff5c5c]';
const green = 'text-[#3de666]';
const signed = (v: string) => (v.startsWith('-') ? green : red);

const QuoteHeader = () => (
  <div className="flex h-[72px] border-b border-[#3c3c3c]">
    <div className="w-[216px]">
      <div className="flex items-center h-[35px] pl-[30px]">
        <span className="font-['Liberation_Sans',sans-serif] text-base text-[#c8c8c8] mr-[6px]">300236</span>
        <span className="text-[22px] font-medium leading-8 text-[#00ffff] whitespace-nowrap">上海新阳</span>
        <svg viewBox="0 0 8 16" className="w-2 h-4 ml-auto mr-1.5" fill="#8c8c8c"><path d="M0 0L8 8L0 16z" /></svg>
      </div>
      <div className={`flex items-center h-[26px] pl-[49px] ${green}`}>
        <span className="font-['Liberation_Sans',sans-serif] font-bold text-2xl leading-6 w-[80px]">57.30</span>
        <span className={num}>
          <span className="block leading-4 whitespace-pre">- 1.66</span>
          <span className="block leading-4 whitespace-pre">- 2.82%</span>
        </span>
      </div>
    </div>
    <div className="pl-2.5">
      <div className="flex gap-[5px] h-[38px] pt-[9px]">
        <span className="w-5 h-5 bg-[#333] text-xs leading-5 text-center text-[#aaa]">融</span>
        <span className="w-5 h-5 bg-[#333] text-xs leading-5 text-center text-[#aaa]">港</span>
      </div>
      <div className="flex gap-3 text-xs">
        <button className="w-[58px] h-6 bg-[#333] text-[#aaa] flex items-center justify-center">
          自选<span className="w-2.5 h-0.5 ml-[3px] bg-[#aaa]" /><Caret />
        </button>
        <button className="w-[58px] h-6 bg-[#333] text-[#aaa] flex items-center justify-center gap-1">提醒<Bell size={11} fill="#aaa" /></button>
        <button className="w-[58px] h-6 bg-[#ec5a00] text-white flex items-center justify-center gap-1">交易<ArrowDownUp size={13} strokeWidth={3} /></button>
      </div>
    </div>
  </div>
);

const dotColor: Record<string, string> = { c: 'text-[#00ffff]', m: 'text-[#ff00ff]', '': 'text-[#3c3c3c]' };

const Levels: React.FC<{ rows: Level[] }> = ({ rows }) => (
  <table className={`w-full table-fixed ${num}`}>
    <colgroup>
      <col className="w-[42px]" /><col className="w-[60px]" /><col className="w-[57px]" /><col className="w-[14px]" /><col />
    </colgroup>
    <tbody>
      {rows.map(([label, price, qty, dot, count]) => (
        <tr key={label} className="h-[18px] leading-[18px] text-right">
          <td className="pl-[5px] p-0 text-left font-normal whitespace-nowrap text-[#808080] font-['Noto_Sans_CJK_SC',sans-serif]">{label}</td>
          <td className={`p-0 ${green}`}>{price}</td>
          <td className="p-0 text-[#c8c8c8]">{qty}</td>
          <td className={`p-0 ${dotColor[dot]}`}>
            <svg viewBox="0 0 6 6" className="w-1.5 h-1.5 ml-1" fill="currentColor"><circle cx="3" cy="3" r="3" /></svg>
          </td>
          <td className="p-0 pr-[5px] text-[#ffffa0]">{count}</td>
        </tr>
      ))}
    </tbody>
  </table>
);

const OrderBook = () => (
  <div className="flex flex-col w-[216px] border-r border-[#3c3c3c] text-sm">
    <div className="flex items-center justify-between h-[22px] px-[5px] border-b border-[#3c3c3c]"><span className="text-[#808080]">交易状态</span><span className="text-[#ccc]">盘后撮合</span></div>
    <div className="flex items-center h-[23px] px-[5px] border-b border-[#3c3c3c]">
      <span className="text-[#808080] w-[50px]">委比</span>
      <span className={`${num} ${green} w-[59px]`}>-56.00%</span>
      <span className="text-[#808080]">委差</span>
      <span className={`${num} ${green} ml-auto`}>-11844</span>
    </div>
    <button className="h-[22px] border-b border-[#3c3c3c] text-[#ffffa0] text-center leading-5">查看完整档买卖盘</button>
    <div className="flex items-center h-[19px] mb-2.5 px-[5px] border-b border-[#3c3c3c]">
      <span className={`${green} w-[50px] whitespace-nowrap`}>卖102档</span>
      <span className={`${num} ${red} w-[47px] text-right`}>62.13</span>
      <span className={`${num} text-[#c8c8c8] w-[57px] text-right`}>16498</span>
      <span className={`${num} text-[#ffffa0] ml-auto`}>11</span>
    </div>
    <Levels rows={SELLS} />
    <div className={`flex h-[17px] text-center text-[#c8c8c8] ${num}`}>
      <span className="w-[22%] bg-[#5a2424] leading-[17px]">22%</span>
      <span className="w-[78%] bg-[#17401f] leading-[17px]">78%</span>
    </div>
    <Levels rows={BUYS} />
    <div className="flex items-center h-5 mt-[11px] px-[5px] border-t border-[#3c3c3c]">
      <span className={`${red} w-[50px] whitespace-nowrap`}>买102档</span>
      <span className={`${num} ${green} w-[47px] text-right`}>56.45</span>
      <span className={`${num} text-[#c8c8c8] w-[57px] text-right`}>4653</span>
      <span className={`${num} text-[#ffffa0] ml-auto`}>7</span>
    </div>
    <div className="flex items-center justify-between h-[26px] px-[6px] bg-[#181818] border-y border-[#3c3c3c] text-[#808080]">
      分时成交
      <button className="w-4 h-4 bg-[#3c3c3c] text-[#ddd] leading-4 rounded-xs">详</button>
    </div>
    <table className={`w-full table-fixed ${num}`}>
      <colgroup><col className="w-9" /><col className="w-[65px]" /><col className="w-3" /><col className="w-[59px]" /><col /></colgroup>
      <tbody>
        {TRADES.map(([time, price, dir, qty, count, isRed], i) => (
          <tr key={i} className={`h-[19px] leading-[19px] text-right ${i > 5 ? 'border-t border-dashed border-[#3c3c3c]' : ''}`}>
            <td className={time.length > 3 ? 'p-0 font-normal text-[#a0a0a0]' : 'p-0 font-normal text-xs text-[#808080]'}>{time}</td>
            <td className={`p-0 ${green}`}>{price}</td>
            <td className={`p-0 ${dir === 'u' ? red : green}`}>
              {dir && <svg viewBox="0 0 8 15" className="w-2 h-[15px] ml-0.5" fill="currentColor"><path d={dir === 'u' ? 'M4 0L8 5H5V15H3V5H0z' : 'M4 15L8 10H5V0H3V10H0z'} /></svg>}
            </td>
            <td className={`p-0 ${isRed ? red : green}`}>{qty}</td>
            <td className="p-0 pr-2 text-[#c8c8c8]">{count}</td>
          </tr>
        ))}
      </tbody>
    </table>
  </div>
);

const NetChart = () => (
  <svg viewBox="1667 294 215 128" className="block w-[215px] h-[128px] shrink-0">
    <path d="M1672.500 300.500h203v98h-203zM1672 349.500h203" stroke="#3c3c3c" fill="none" />
    <path d="M1673 324.500h202M1673 372.500h202" stroke="#3c3c3c" strokeDasharray="3 3" />
    <path d="M1689 350h16v33h-16zM1739 350h16v1h-16zM1789 350h16v11h-16z" fill="#3de666" />
    <rect x="1839" y="301" width="16" height="48" fill="#ff5c5c" />
    <g className={num} textAnchor="middle" fill="#3de666">
      <text x="1697" y="346">-4033</text>
      <text x="1747" y="346">-215</text>
      <text x="1796" y="346">-1438</text>
      <text x="1847" y="363" fill="#ff5c5c">5686</text>
    </g>
    <g className="font-['Noto_Sans_CJK_SC',sans-serif] text-sm" textAnchor="middle" fill="#808080">
      <text x="1696" y="415">净超大</text>
      <text x="1746" y="415">净大单</text>
      <text x="1796" y="415">净中单</text>
      <text x="1846" y="415">净小单</text>
    </g>
  </svg>
);

const FundsPanel = () => (
  <div className="flex flex-col flex-1 border-r border-[#3c3c3c] text-sm text-[#808080]">
    <div className="flex h-[23px] bg-[#181818] border-b border-[#3c3c3c] text-xs">
      {['盘口', '资金', '基本', '指数', '明细', '逐笔'].map((t) => (
        <button key={t} className={t === '资金' ? 'w-[35px] bg-[#3c3c3c] text-[#eee]' : t === '逐笔' ? 'w-[35px]' : 'w-[35px] border-r border-[#3c3c3c]'}>{t}</button>
      ))}
    </div>
    <div className="flex h-[22px] bg-[#181818] border-b border-[#3c3c3c] text-xs">
      {['当日', '3日', '5日', '10日'].map((t) => (
        <button key={t} className={t === '当日' ? 'w-[53px] bg-[#3c3c3c] text-[#eee]' : t === '10日' ? 'w-[53px]' : 'w-[53px] border-r border-[#3c3c3c]'}>{t}</button>
      ))}
    </div>
    <div className="flex flex-col justify-center h-[67px] border-b border-[#3c3c3c] pl-1 pr-2">
      {[['主力流入', '22665', red], ['主力流出', '26913', green], ['主力净流入', '-4248', green]].map(([label, v, c]) => (
        <div key={label} className="flex items-center justify-between h-[22px]">
          <span>{label}</span>
          <span><span className={`${num} ${c}`}>{v}</span>万元</span>
        </div>
      ))}
    </div>
    <table className="w-full table-fixed">
      <colgroup><col className="w-[60px]" /><col className="w-[65px]" /><col /></colgroup>
      <thead>
        <tr className="h-[25px] bg-[#181818] border-b border-[#3c3c3c] text-xs text-right">
          <th className="p-0 font-normal text-left pl-0.5">(万元)</th>
          <th className="p-0 font-normal">流入</th>
          <th className="p-0 pr-2 font-normal">流出</th>
        </tr>
      </thead>
      <tbody>
        {[['超大', '5663', '9696'], ['大单', '17002', '17217'], ['中单', '22076', '23514'], ['小单', '18070', '12384']].map(([k, a, b]) => (
          <tr key={k} className="h-5 leading-5 text-right">
            <td className="p-0 pl-1 text-left">{k}</td>
            <td className={`p-0 ${num} leading-5 ${red}`}>{a}</td>
            <td className={`p-0 pr-2 ${num} leading-5 ${green}`}>{b}</td>
          </tr>
        ))}
      </tbody>
    </table>
    <div className="border-y border-[#3c3c3c] mt-0.5"><NetChart /></div>
    <table className="w-full table-fixed leading-5">
      <colgroup><col className="w-[60px]" /><col className="w-[68px]" /><col /></colgroup>
      <thead>
        <tr className="h-5 text-left">
          <th className="p-0 pl-1 font-normal">时间</th>
          <th className="p-0 pl-0.5 font-normal">总排名</th>
          <th className="p-0 pr-2 font-normal text-right whitespace-nowrap">增仓占比%</th>
        </tr>
      </thead>
      <tbody>
        {[['今日', '4284', '-6.67'], ['3 日', '4291', '-5.05'], ['5 日', '1183', '0.97'], ['10日', '1454', '0.11']].map(([k, rank, v]) => (
          <tr key={k} className="h-5">
            <td className="p-0 pl-1">{k}</td>
            <td className="p-0 pl-0.5 text-[#ccc] whitespace-nowrap">第<span className={`${num} mx-0.5`}>{rank}</span>名</td>
            <td className={`p-0 pr-2 text-right ${num} leading-5 ${signed(v)}`}>{v}</td>
          </tr>
        ))}
      </tbody>
    </table>
    <table className="w-full table-fixed border-t border-[#3c3c3c] mt-0.5">
      <colgroup><col className="w-[72px]" /><col className="w-[51px]" /><col /></colgroup>
      <thead>
        <tr className="h-[22px] text-xs text-right border-b border-[#3c3c3c] text-[#666]">
          <th className="p-0 pl-[3px] font-normal text-left">名称</th>
          <th className="p-0 font-normal whitespace-nowrap">涨幅%<span className="text-[#ffffa0]">↓</span></th>
          <th className="p-0 pr-4 font-normal">主力净流入</th>
        </tr>
      </thead>
      <tbody>
        {SECTORS.map(([name, pct, flow], i) => (
          <tr key={name} className={`h-[22px] leading-5 text-right ${i === 13 ? 'border-t border-[#ffffa0]' : ''}`}>
            <td className="p-0 pl-1.5 text-left whitespace-nowrap text-[#ffffa0]"><Mixed big text={name} /></td>
            <td className={`p-0 ${num} leading-5 ${signed(pct)}`}>{pct}</td>
            <td className={`p-0 pr-[14px] ${signed(flow)}`}><span className={num}>{flow}</span><span className="text-base leading-5">亿</span></td>
          </tr>
        ))}
      </tbody>
    </table>
  </div>
);

/* ---------- status bar ---------- */

const Counts: React.FC<{ up: string; flat: string; down: string }> = ({ up, flat, down }) => (
  <span className="flex justify-end">
    <span className={`${red} pr-[3px]`}>{up}</span>
    <span className="text-[#ccc] border-x border-[#3c3c3c] px-[3px]">{flat}</span>
    <span className={`${green} pl-[3px]`}>{down}</span>
  </span>
);

const Connect: React.FC<{ label: string }> = ({ label }) => (
  <span className="flex-[152] flex items-center justify-center gap-0.5 border-r border-[#3c3c3c] text-sm font-normal text-[#c8c8c8]">
    {label}
    <span className="w-3.5 h-3.5 rounded-full border border-[#8c8c8c] text-[10px] leading-3 text-center">?</span>
    <span className="w-[13px] h-px bg-[#c8c8c8]" />
  </span>
);

const StatusBar = () => (
  <div className={`flex items-stretch h-[23px] border-y border-[#3c3c3c] leading-5 ${num}`}>
    <div className={`flex-[443] grid grid-cols-[76fr_111fr_95fr_135fr_26fr] items-center text-right border-r border-[#3c3c3c] ${red}`}>
      <span>3890.45</span><span>▲ 14.08</span><span>+0.36%</span><Counts up="1838" flat="37" down="458" />
    </div>
    <span className="flex-[112] flex items-center justify-center text-[#00ffff] border-r border-[#3c3c3c]">7380.7<span className="font-normal">亿</span></span>
    <Connect label="沪股通" />
    <span className="w-[29px] flex items-center justify-center border-r border-[#3c3c3c] font-normal text-[#a0a0a0]">深</span>
    <div className={`flex-[463] grid grid-cols-[83fr_112fr_98fr_137fr_33fr] items-center text-right border-r border-[#3c3c3c] ${red}`}>
      <span>13140.21</span><span>▲ 86.24</span><span>+0.66%</span><Counts up="2453" flat="44" down="411" />
    </div>
    <span className="flex-[111] flex items-center justify-center text-[#00ffff] border-r border-[#3c3c3c]">9878.5<span className="font-normal">亿</span></span>
    <Connect label="深股通" />
    <span className="w-[66px] flex items-center justify-center border-r border-[#3c3c3c] font-normal text-[#a0a0a0]">创业板指</span>
    <div className={`flex-[356] grid grid-cols-[80fr_114fr_99fr_63fr] items-center text-right ${red}`}>
      <span>3122.24</span><span>▲ 15.18</span><span>+0.49%</span>
      <button aria-label="设置" className="justify-self-end mr-3 text-[#a0a0a0]"><Settings size={14} /></button>
    </div>
  </div>
);

const App: React.FC = () => {
  return (
    <div className="relative flex flex-col w-full min-h-screen overflow-hidden bg-[#070707] border-t border-[#3c3c3c] font-['Liberation_Sans','Noto_Sans_CJK_SC',sans-serif]">
      <div className="flex flex-1">
        <div className="flex flex-col flex-1 min-w-0">
          <Toolbar />
          <div className="flex">
            <div className="flex flex-col flex-1 min-w-0">
              <div className="flex">
                <div className="flex-1 min-w-0 border-r border-[#2a2a2a]"><LegendRow /></div>
                <div className="w-[58px]" />
              </div>
              <div className="relative flex">
                <div className="flex-1 min-w-0 border-r border-[#2a2a2a]"><MainChart /></div>
                <PriceAxis />
                <CapacityTable />
                <Commentary />
                <div className="absolute right-[52px] top-[3px] w-[67px] h-[356px] border-[3px] border-[#ff0]" />
              </div>
              <div className="flex">
                <div className="flex-1 min-w-0 border-r border-[#2a2a2a]">
                  <PaneHeader
                    name="VOL(5,10)"
                    values={[
                      { text: 'VOLUME:10.967万', color: 'text-white' },
                      { text: 'MAVOL1:15.203万', down: true, color: 'text-[#ff0]' },
                      { text: 'MAVOL2:13.340万', color: 'text-[#f0f]' },
                    ]}
                  />
                  <VolumeChart />
                  <PaneHeader name="DDZ" values={[{ text: 'ddz:-17.570', down: true, color: 'text-white' }]} />
                  <DdzChart />
                  <PaneHeader
                    name="资金趋势"
                    values={[
                      { text: '资金流:-4248.213万', color: 'text-white' },
                      { text: 'ma5:890.630万', down: true, color: 'text-[#ff0]' },
                      { text: 'ma10:85.948万', color: 'text-[#f0f]' },
                      { text: 'ma20:-1377.955万', down: true, color: 'text-[#0f0]' },
                    ]}
                  />
                  <FlowChart />
                </div>
                <div className="flex flex-col justify-between w-[58px] pt-[234px] pb-[3px] pr-1.5 text-right text-[#6e6e6e] font-['DejaVu_Sans_Mono',monospace] text-[10px] leading-4">
                  <span>1.70</span>
                  <span>-634.00</span>
                  <span>-1.79</span>
                </div>
              </div>
              <TimeAxis />
            </div>
            <ChipColumn />
          </div>
          <IndicatorBar />
          <div className="flex justify-center items-end h-[7px] border-t border-[#3c3c3c] bg-linear-to-r from-transparent from-25% via-[#444] to-transparent to-60%">
            <svg viewBox="0 0 19 5" className="w-[19px] h-1" fill="#ddd"><path d="M0 5L9.500 0L19 5z" /></svg>
          </div>
          <TabBar />
        </div>
        <div className="flex items-center w-2 bg-[#1a1a1a] border-x border-[#3c3c3c]">
          <svg viewBox="0 0 4 20" className="w-1 h-5" fill="#ccc"><path d="M0 0L4 8V12L0 20z" /></svg>
        </div>
        <div className="flex flex-col w-[432px] shrink-0">
          <QuoteHeader />
          <div className="flex flex-1">
            <OrderBook />
            <FundsPanel />
          </div>
        </div>
      </div>
      <StatusBar />
      <RevenueMix />
      <OutputChart />
      <div className="absolute right-0 top-[742px] flex flex-col justify-end gap-0.5 w-2 h-[58px] pb-1.5 pl-[3px] rounded-l bg-[#303648]">
        {[0, 1, 2, 3, 4, 5].map((i) => <span key={i} className="w-1 h-px bg-[#60d0a0]" />)}
        {[0, 1].map((i) => <span key={i} className="order-first w-1 h-px bg-[#b0d040]" />)}
      </div>
    </div>
  );
};

export default App;
